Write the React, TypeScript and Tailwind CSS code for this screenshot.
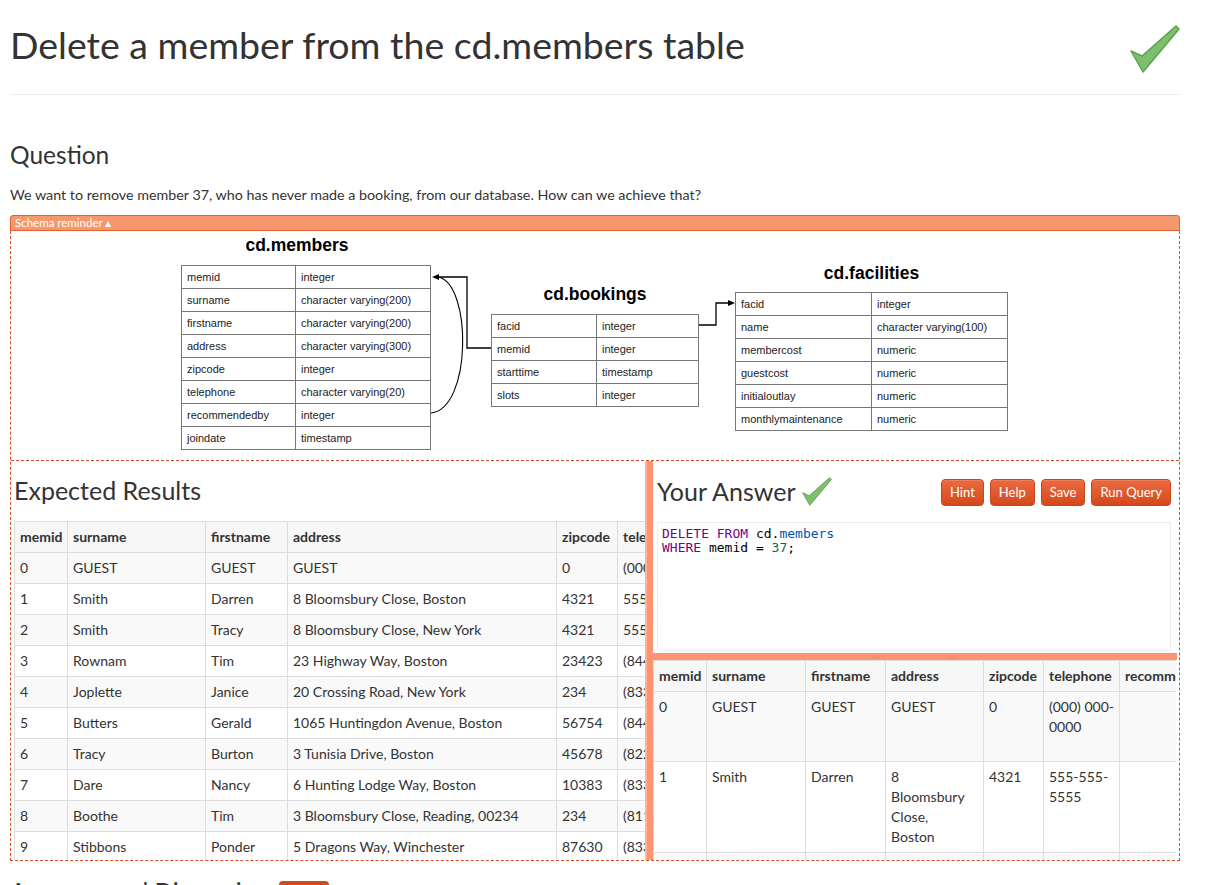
import React from "react";

const FONT = { fontFamily: "Lato, 'Noto Sans', sans-serif" };

function Check({ w, h }: { w: number; h: number }) {
  return (
    <svg width={w} height={h} viewBox="0 0 50 48">
      <polygon
        points="1,26 12,31 46,1 49,4 13,47"
        fill="#7cc06c"
        stroke="#5e9f50"
        strokeWidth="1.5"
        strokeLinejoin="round"
      />
    </svg>
  );
}

function SchemaTable({
  title,
  rows,
  left,
  top,
  width,
  col1,
  titleTop,
  titleShift = 0,
}: {
  title: string;
  rows: [string, string][];
  left: number;
  top: number;
  width: number;
  col1: number;
  titleTop: number;
  titleShift?: number;
}) {
  return (
    <>
      <div
        className="absolute text-center font-bold text-[17.5px] leading-[20px] text-black"
        style={{ left: left + titleShift, top: titleTop, width, fontFamily: "'Liberation Sans', Arial, sans-serif" }}
      >
        {title}
      </div>
      <table
        className="absolute border-collapse text-[11px] text-[#222]"
        style={{ left, top, width, fontFamily: "'Liberation Sans', Arial, sans-serif" }}
      >
        <tbody>
          {rows.map(([a, b]) => (
            <tr key={a} className="h-[23px]">
              <td className="border border-[#777] pl-[5px] py-0" style={{ width: col1 }}>
                {a}
              </td>
              <td className="border border-[#777] pl-[5px] py-0">{b}</td>
            </tr>
          ))}
        </tbody>
      </table>
    </>
  );
}

function SchemaDiagram() {
  return (
    <div className="relative mx-auto w-[830px] h-[229px]">
      <SchemaTable
        title="cd.members"
        left={1}
        top={34}
        width={250}
        col1={114}
        titleTop={4}
        titleShift={-9}
        rows={[
          ["memid", "integer"],
          ["surname", "character varying(200)"],
          ["firstname", "character varying(200)"],
          ["address", "character varying(300)"],
          ["zipcode", "integer"],
          ["telephone", "character varying(20)"],
          ["recommendedby", "integer"],
          ["joindate", "timestamp"],
        ]}
      />
      <SchemaTable
        title="cd.bookings"
        left={311}
        top={83}
        width={208}
        col1={105}
        titleTop={53}
        rows={[
          ["facid", "integer"],
          ["memid", "integer"],
          ["starttime", "timestamp"],
          ["slots", "integer"],
        ]}
      />
      <SchemaTable
        title="cd.facilities"
        left={555}
        top={61}
        width={273}
        col1={136}
        titleTop={32}
        rows={[
          ["facid", "integer"],
          ["name", "character varying(100)"],
          ["membercost", "numeric"],
          ["guestcost", "numeric"],
          ["initialoutlay", "numeric"],
          ["monthlymaintenance", "numeric"],
        ]}
      />
      <svg className="absolute left-0 top-0" width="830" height="229">
        <path d="M311 117 H287 V46 H258" fill="none" stroke="#000" strokeWidth="1.3" />
        <polygon points="252,46 259,43 259,49" fill="#000" />
        <path d="M251 182 C 292 178, 292 52, 258 46" fill="none" stroke="#000" strokeWidth="1.1" />
        <path d="M519 94 H536 V72 H549" fill="none" stroke="#000" strokeWidth="1.3" />
        <polygon points="555,72 548,69 548,75" fill="#000" />
      </svg>
    </div>
  );
}

const expected: string[][] = [
  ["0", "GUEST", "GUEST", "GUEST", "0", "(000) 000-0000"],
  ["1", "Smith", "Darren", "8 Bloomsbury Close, Boston", "4321", "555-555-5555"],
  ["2", "Smith", "Tracy", "8 Bloomsbury Close, New York", "4321", "555-555-5555"],
  ["3", "Rownam", "Tim", "23 Highway Way, Boston", "23423", "(844) 693-0723"],
  ["4", "Joplette", "Janice", "20 Crossing Road, New York", "234", "(833) 942-4710"],
  ["5", "Butters", "Gerald", "1065 Huntingdon Avenue, Boston", "56754", "(844) 078-4130"],
  ["6", "Tracy", "Burton", "3 Tunisia Drive, Boston", "45678", "(822) 354-9973"],
  ["7", "Dare", "Nancy", "6 Hunting Lodge Way, Boston", "10383", "(833) 776-4001"],
  ["8", "Boothe", "Tim", "3 Bloomsbury Close, Reading, 00234", "234", "(811) 433-2547"],
  ["9", "Stibbons", "Ponder", "5 Dragons Way, Winchester", "87630", "(833) 160-3900"],
];

function ExpectedTable() {
  const widths = [53, 138, 82, 269, 61, 140];
  const heads = ["memid", "surname", "firstname", "address", "zipcode", "telephone"];
  return (
    <table className="table-fixed border-collapse w-[743px] text-[14px] leading-[20px] text-[#333]">
      <thead>
        <tr className="bg-[#f7f7f7]">
          {heads.map((h, i) => (
            <th
              key={h}
              className="border border-[#ddd] px-[5px] py-[5px] text-left font-bold whitespace-nowrap overflow-hidden"
              style={{ width: widths[i] }}
            >
              {h}
            </th>
          ))}
        </tr>
      </thead>
      <tbody>
        {expected.map((r, ri) => (
          <tr key={ri} className={ri % 2 === 0 ? "bg-[#f9f9f9]" : "bg-white"}>
            {r.map((c, ci) => (
              <td
                key={ci}
                className="border border-[#ddd] px-[5px] py-[5px] whitespace-nowrap overflow-hidden"
              >
                {c}
              </td>
            ))}
          </tr>
        ))}
      </tbody>
    </table>
  );
}

function ResultTable() {
  const widths = [53, 99, 80, 98, 60, 76, 140, 110];
  const heads = ["memid", "surname", "firstname", "address", "zipcode", "telephone", "recommendedby", "joindate"];
  return (
    <table className="table-fixed border-collapse w-[716px] text-[14px] leading-[20px] text-[#333]">
      <thead>
        <tr className="bg-[#f7f7f7]">
          {heads.map((h, i) => (
            <th
              key={h}
              className="border border-[#ddd] px-[5px] py-[5px] text-left font-bold whitespace-nowrap overflow-hidden"
              style={{ width: widths[i] }}
            >
              {h}
            </th>
          ))}
        </tr>
      </thead>
      <tbody>
        <tr className="bg-[#f9f9f9] h-[70px] align-top">
          <td className="border border-[#ddd] p-[5px]">0</td>
          <td className="border border-[#ddd] p-[5px]">GUEST</td>
          <td className="border border-[#ddd] p-[5px]">GUEST</td>
          <td className="border border-[#ddd] p-[5px]">GUEST</td>
          <td className="border border-[#ddd] p-[5px]">0</td>
          <td className="border border-[#ddd] p-[5px]">
            (000) 000-
            <br />
            0000
          </td>
          <td className="border border-[#ddd] p-[5px]"></td>
          <td className="border border-[#ddd] p-[5px]">2012-07-01 00:00:00</td>
        </tr>
        <tr className="bg-white h-[91px] align-top">
          <td className="border border-[#ddd] p-[5px]">1</td>
          <td className="border border-[#ddd] p-[5px]">Smith</td>
          <td className="border border-[#ddd] p-[5px]">Darren</td>
          <td className="border border-[#ddd] p-[5px]">
            8<br />
            Bloomsbury
            <br />
            Close,
            <br />
            Boston
          </td>
          <td className="border border-[#ddd] p-[5px]">4321</td>
          <td className="border border-[#ddd] p-[5px]">
            555-555-
            <br />
            5555
          </td>
          <td className="border border-[#ddd] p-[5px]"></td>
          <td className="border border-[#ddd] p-[5px]">2012-07-02 12:02:05</td>
        </tr>
        <tr className="bg-[#f9f9f9] h-[70px] align-top">
          <td className="border border-[#ddd] p-[5px]">2</td>
          <td className="border border-[#ddd] p-[5px]">Smith</td>
          <td className="border border-[#ddd] p-[5px]">Tracy</td>
          <td className="border border-[#ddd] p-[5px]">8</td>
          <td className="border border-[#ddd] p-[5px]">4321</td>
          <td className="border border-[#ddd] p-[5px]">555-555-</td>
          <td className="border border-[#ddd] p-[5px]"></td>
          <td className="border border-[#ddd] p-[5px]"></td>
        </tr>
      </tbody>
    </table>
  );
}

function Btn({ children }: { children: React.ReactNode }) {
  return (
    <button className="h-[27px] px-[8px] rounded-[4px] border border-[#c8461b] bg-gradient-to-b from-[#ec6a40] to-[#d4481a] text-white text-[13px] leading-[25px] shadow-[inset_0_1px_0_rgba(255,255,255,0.15)]">
      {children}
    </button>
  );
}

export default function App() {
  return (
    <div className="bg-white min-h-[885px] text-[#333]" style={FONT}>
      <div className="w-[1170px] ml-[10px]">
        <div className="flex items-start justify-between pt-[25px]">
          <h1 className="text-[37.5px] leading-[40px] font-normal text-[#333]">
            Delete a member from the cd.members table
          </h1>
          <div className="mt-[0px]">
            <Check w={50} h={48} />
          </div>
        </div>
        <div className="mt-[21px] border-t border-[#eee]" />
        <h2 className="mt-[45px] text-[24.5px] leading-[30px] font-normal">Question</h2>
        <p className="mt-[15px] text-[14.3px] leading-[20px]">
          We want to remove member 37, who has never made a booking, from our database. How can we achieve that?
        </p>
        <div className="mt-[10px] h-[16px] bg-[#f7976d] border border-[#e2622f] rounded-t-[3px] text-white text-[11.5px] leading-[14px] pl-[4px]">
          Schema reminder ▴
        </div>
        <div className="border-x border-b border-dashed border-[#d9501e]">
          <SchemaDiagram />
          <div className="border-t border-dashed border-[#d9501e] flex h-[400px]">
            <div className="w-[634px] shrink-0 overflow-hidden pl-[3px] pt-[16px]">
              <h3 className="text-[25px] leading-[26px] font-normal">Expected Results</h3>
              <div className="mt-[18px]">
                <ExpectedTable />
              </div>
            </div>
            <div className="w-[8px] shrink-0 bg-[#fe9372] border-l-[2px] border-[#ffb496]" />
            <div className="flex-1 min-w-0 overflow-hidden flex flex-col">
              <div className="pl-[4px] pr-[8px] pt-[15px] h-[192px] shrink-0">
                <div className="flex items-center justify-between h-[30px]">
                  <div className="flex items-center gap-[6px]">
                    <h3 className="text-[25px] leading-[26px] font-normal">Your Answer</h3>
                    <Check w={30} h={29} />
                  </div>
                  <div className="flex gap-[6px] pt-[2px]">
                    <Btn>Hint</Btn>
                    <Btn>Help</Btn>
                    <Btn>Save</Btn>
                    <Btn>Run Query</Btn>
                  </div>
                </div>
                <div
                  className="mt-[16px] h-[129px] border border-[#eee] pl-[4px] pt-[4px] text-[13px] leading-[14px] text-black"
                  style={{ fontFamily: "'DejaVu Sans Mono', monospace" }}
                >
                  <div>
                    <span className="text-[#770088]">DELETE FROM</span> cd.
                    <span className="text-[#0055aa]">members</span>
                  </div>
                  <div>
                    <span className="text-[#770088]">WHERE</span> memid = <span className="text-[#116644]">37</span>;
                  </div>
                </div>
              </div>
              <div className="h-[7px] shrink-0 bg-[#fe9372] mr-[2px] ml-[-1px] flex justify-center gap-[70px] items-center">
                <span className="text-[8px] leading-[4px] text-[#c9876f]">···</span>
                <span className="text-[8px] leading-[4px] text-[#c9876f]">···</span>
              </div>
              <div className="overflow-hidden mr-[3px] min-h-0">
                <ResultTable />
              </div>
            </div>
          </div>
        </div>
        <div className="mt-[16px] flex items-center gap-[10px]">
          <h2 className="text-[24.5px] leading-[30px] font-normal">Answers and Discussion</h2>
          <span className="h-[22px] w-[50px] rounded-[4px] bg-[#d4481a]" />
        </div>
      </div>
    </div>
  );
}
